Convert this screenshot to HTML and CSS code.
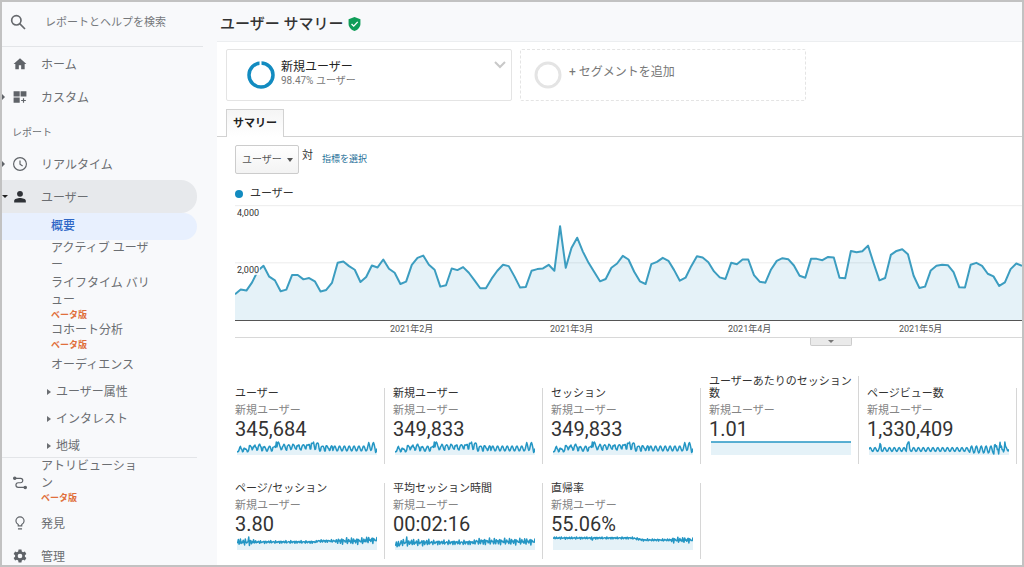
FILE: index.html
```html
<!DOCTYPE html>
<html lang="ja">
<head>
<meta charset="utf-8">
<meta name="viewport" content="width=device-width, initial-scale=1">
<title>ユーザー サマリー</title>
<link rel="stylesheet" href="styles.css">
</head>
<body>
<div class="app">
  <aside class="sidebar">
    <form class="search" role="search">
      <label for="q" class="search-label" aria-label="検索"><svg class="search-icon" viewBox="0 0 24 24"><circle cx="9.500" cy="9.500" r="7"/><path d="M14.500 14.500 22.500 22.500"/></svg></label>
      <input id="q" class="search-input" type="text" placeholder="レポートとヘルプを検索">
    </form>
    <nav class="nav">
      <a class="item" href="#"><svg class="icon" viewBox="0 0 24 24"><path d="M10 21v-7h4v7h6v-9h3L12 2 1 12h3v9z"/></svg><span>ホーム</span></a>
      <a class="item has-arrow" href="#"><svg class="icon" viewBox="0 0 24 24"><path d="M1 2h10.500v9H1zM13 2h10v9H13zM1 13h10.500v9H1zM17 14h2v3h3v2h-3v3h-2v-3h-3v-2h3z"/></svg><span>カスタム</span></a>
      <h2 class="nav-title">レポート</h2>
      <a class="item has-arrow" href="#"><svg class="icon line" viewBox="0 0 24 24"><circle cx="12" cy="12" r="11"/><path d="M12 6v6.500l4.500 3"/></svg><span>リアルタイム</span></a>
      <a class="item is-open" href="#"><svg class="icon" viewBox="0 0 24 24"><circle cx="12" cy="6.500" r="5"/><path d="M2 21.500v-3c0-3.500 6-5 10-5s10 1.500 10 5v3z"/></svg><span>ユーザー</span></a>
      <a class="sub is-current" href="#">概要</a>
      <a class="sub wrap" href="#">アクティブ ユーザー</a>
      <a class="sub wrap" href="#">ライフタイム バリュー<small class="beta">ベータ版</small></a>
      <a class="sub wrap" href="#">コホート分析<small class="beta">ベータ版</small></a>
      <a class="sub" href="#">オーディエンス</a>
      <a class="sub group" href="#">ユーザー属性</a>
      <a class="sub group" href="#">インタレスト</a>
      <a class="sub group" href="#">地域</a>
      <a class="item tall" href="#"><svg class="icon line" viewBox="0 0 24 24"><path d="M3 4h10a3.500 3.500 0 0 1 0 7.500H9a4 4 0 0 0 0 8h11"/><circle class="dot" cx="3" cy="4" r="2"/><circle class="dot" cx="21" cy="19.500" r="2"/></svg><span class="long">アトリビューション<small class="beta">ベータ版</small></span></a>
      <a class="item" href="#"><svg class="icon line" viewBox="0 0 24 24"><path d="M9 17v-2.500C6.500 13 5 11 5 8.500a7 7 0 0 1 14 0c0 2.500-1.500 4.500-4 6V17zM8.500 22h7"/></svg><span>発見</span></a>
      <a class="item" href="#"><svg class="icon" viewBox="0 0 24 24"><path fill-rule="evenodd" d="M9.500 1h5l.6 3.200 2.200 1.300 3.100-1.100 2.500 4.300-2.500 2.100v2.400l2.500 2.100-2.500 4.300-3.100-1.100-2.200 1.300-.6 3.200h-5l-.6-3.200-2.200-1.300-3.100 1.100-2.500-4.300 2.500-2.100v-2.400L1.100 8.700l2.500-4.300 3.100 1.100 2.200-1.300zM12 8a4 4 0 1 0 0 8 4 4 0 0 0 0-8z"/></svg><span>管理</span></a>
    </nav>
  </aside>
  <main class="main">
    <header class="header">
      <h1 class="title">ユーザー サマリー</h1>
      <svg class="shield" viewBox="0 0 24 26"><path fill="#0f9d58" d="M12 0 23 4v9c0 6-5 11-11 13C6 24 1 19 1 13V4z"/><path fill="none" stroke="#fff" stroke-width="2.500" d="m6.500 13 4 4 7.500-8"/></svg>
    </header>
    <div class="content">
      <section class="segments">
        <button class="segment" type="button">
          <svg class="ring" viewBox="0 0 28 28"><circle cx="14" cy="14" r="12"/><path d="M13.500 0v5"/></svg>
          <span class="segment-text"><span class="segment-name">新規ユーザー</span><span class="segment-share">98.47% ユーザー</span></span>
          <svg class="chevron" viewBox="0 0 12 8"><path d="m1 1 5 5 5-5"/></svg>
        </button>
        <button class="segment add" type="button">
          <svg class="ring empty" viewBox="0 0 28 28"><circle cx="14" cy="14" r="12"/></svg>
          <span class="segment-add">+ セグメントを追加</span>
        </button>
      </section>
      <div class="tabs" role="tablist"><button class="tab" type="button" role="tab" aria-selected="true">サマリー</button></div>
      <section class="report">
        <div class="controls">
          <span class="select-box"><select class="select" aria-label="指標"><option>ユーザー</option></select></span>
          <span class="versus">対</span>
          <a class="pick" href="#">指標を選択</a>
        </div>
        <div class="legend">ユーザー</div>
        <div class="chart">
          <svg class="plot" id="plot" viewBox="0 0 2361 348" preserveAspectRatio="none"></svg>
          <span class="tick top">4,000</span>
          <span class="tick mid">2,000</span>
        </div>
        <div class="months"><span>2021年2月</span><span>2021年3月</span><span>2021年4月</span><span>2021年5月</span></div>
        <div class="timeline"><button class="handle" type="button" aria-label="展開"></button></div>
        <div class="metrics">
          <article class="metric"><h3 class="name">ユーザー</h3><p class="who">新規ユーザー</p><p class="value">345,684</p><svg class="spark" data-kind="users"></svg></article>
          <article class="metric"><h3 class="name">新規ユーザー</h3><p class="who">新規ユーザー</p><p class="value">349,833</p><svg class="spark" data-kind="users"></svg></article>
          <article class="metric"><h3 class="name">セッション</h3><p class="who">新規ユーザー</p><p class="value">349,833</p><svg class="spark" data-kind="users"></svg></article>
          <article class="metric"><h3 class="name">ユーザーあたりのセッション数</h3><p class="who">新規ユーザー</p><p class="value">1.01</p><svg class="spark" data-kind="flat"></svg></article>
          <article class="metric"><h3 class="name">ページビュー数</h3><p class="who">新規ユーザー</p><p class="value">1,330,409</p><svg class="spark" data-kind="views"></svg></article>
          <article class="metric"><h3 class="name">ページ/セッション</h3><p class="who">新規ユーザー</p><p class="value">3.80</p><svg class="spark" data-kind="pages"></svg></article>
          <article class="metric"><h3 class="name">平均セッション時間</h3><p class="who">新規ユーザー</p><p class="value">00:02:16</p><svg class="spark" data-kind="time"></svg></article>
          <article class="metric"><h3 class="name">直帰率</h3><p class="who">新規ユーザー</p><p class="value">55.06%</p><svg class="spark" data-kind="bounce"></svg></article>
        </div>
      </section>
    </div>
  </main>
</div>
<script src="charts.js"></script>
</body>
</html>
```

FILE: styles.css
```css
* { box-sizing: border-box; }
body {
  margin: 0;
  font-family: Roboto, "Noto Sans CJK JP", sans-serif;
  font-size: 12px;
  color: #333;
}
h1, h2, h3, p { margin: 0; font-weight: 400; }
a { color: inherit; text-decoration: none; }
button, input, select { font: inherit; color: inherit; }

.app {
  display: flex;
  height: 100vh;
  overflow: hidden;
  background: #f8f9fb;
  border: 2px solid #c2c2c2;
}

/* Sidebar */
.sidebar { flex: 0 0 215px; overflow: hidden; color: #6b6e72; }
.search {
  display: flex;
  align-items: center;
  height: 45px;
  margin-right: 14px;
  padding: 0 0 4px 8px;
  border-bottom: 1px solid #e3e5e8;
}
.search-label { display: flex; }
.search-icon { width: 16px; height: 16px; fill: none; stroke: #66696d; stroke-width: 2.5; }
.search-input {
  flex: 1;
  min-width: 0;
  margin-left: 19px;
  padding: 0;
  border: 0;
  background: none;
  font-size: 11px;
}
.search-input::placeholder { color: #75787c; }
.item {
  position: relative;
  display: flex;
  align-items: center;
  gap: 14px;
  height: 33px;
  padding-left: 11px;
  margin-right: 20px;
}
.icon { flex: none; width: 14px; height: 14px; overflow: visible; fill: #5f6368; }
.icon.line { fill: none; stroke: #5f6368; stroke-width: 2; }
.icon .dot { fill: #5f6368; }
.has-arrow::before, .is-open::before {
  content: "";
  position: absolute;
  left: 0;
  border: 3px solid transparent;
}
.has-arrow::before { border-left-color: #5f6368; border-right: 0; }
.is-open::before { border-top-color: #222; border-bottom: 0; }
.is-open { background: #e7e9ec; border-radius: 0 16px 16px 0; }
.is-open .icon { fill: #2f3237; }
.nav-title { padding: 12px 0 7px 10px; font-size: 10px; line-height: 15px; }
.sub { display: block; margin-right: 20px; padding-left: 49px; line-height: 27px; }
.sub.is-current {
  background: #e8f0fe;
  border-radius: 0 14px 14px 0;
  color: #2f67c6;
  font-weight: 500;
}
.sub.wrap { width: 152px; padding-bottom: 1px; line-height: 17px; line-break: anywhere; }
.sub.group { position: relative; padding-left: 54px; }
.sub.group::before {
  content: "";
  position: absolute;
  left: 45px;
  top: 10px;
  border: 3px solid transparent;
  border-left: 4px solid #6b6e72;
  border-right: 0;
}
.beta { display: block; color: #e0703c; font-size: 9px; font-weight: 700; line-height: 12px; }
.item.tall {
  height: 49px;
  margin-top: -3px;
  align-items: flex-start;
  border-top: 1px solid #e3e5e8;
}
.tall .icon { margin-top: 18px; }
.long { width: 100px; line-height: 17px; line-break: anywhere; }

/* Header */
.main { flex: 1; min-width: 0; }
.header { display: flex; align-items: center; gap: 5px; height: 39px; padding: 4px 0 0 3px; }
.title { color: #333; font-size: 15px; font-weight: 500; line-height: 22px; }
.shield { width: 13px; height: 14px; }
.content { height: 100%; background: #fff; border-top: 1px solid #eceef0; }

/* Segments */
.segments { display: flex; gap: 8px; padding: 7px 9px 0; }
.segment {
  display: flex;
  align-items: flex-start;
  flex: 0 1 286px;
  height: 52px;
  padding: 11px 5px 0 20px;
  background: #fff;
  border: 1px solid #e4e4e4;
  border-radius: 2px;
  text-align: left;
}
.segment.add { padding-left: 13px; border-style: dashed; color: #777; }
.ring { width: 28px; height: 28px; fill: none; stroke: #128bc0; stroke-width: 3.5; }
.ring path { stroke: #fff; stroke-width: 2; }
.ring.empty { stroke: #e4e4e4; stroke-width: 3; }
.segment-text { flex: 1; margin-left: 6px; }
.segment-name { display: block; color: #222; line-height: 13px; }
.segment-share { display: block; color: #777; font-size: 10px; line-height: 14px; }
.segment-add { margin: 2px 0 0 7px; line-height: 18px; }
.chevron { width: 12px; height: 8px; fill: none; stroke: #c8c8c8; stroke-width: 2; }

/* Tabs */
.tabs { display: flex; margin-top: 8px; padding-left: 9px; border-bottom: 1px solid #d2d2d2; }
.tab {
  height: 28px;
  margin-bottom: -1px;
  padding: 0 6px 3px;
  border: 1px solid #d2d2d2;
  border-bottom: 0;
  background: linear-gradient(#f5f5f5, #fff);
  color: #222;
  font-size: 11px;
  font-weight: 700;
}

/* Report */
.report { padding: 8px 0 0 18px; }
.controls { display: flex; align-items: flex-start; height: 30px; }
.select-box { position: relative; }
.select-box::after {
  content: "";
  position: absolute;
  right: 6px;
  top: 13px;
  border: 3px solid transparent;
  border-top: 4px solid #555;
  border-bottom: 0;
  pointer-events: none;
}
.select {
  appearance: none;
  width: 64px;
  height: 29px;
  padding: 0 0 0 6px;
  border: 1px solid #ccc;
  border-radius: 2px;
  background: linear-gradient(#fff, #f3f3f3);
  color: #555;
  font-size: 10px;
}
.versus { margin-left: 3px; font-size: 11px; line-height: 22px; }
.pick { margin-left: 9px; color: #1f6f98; font-size: 9px; line-height: 28px; }
.legend {
  display: flex;
  align-items: center;
  gap: 7px;
  margin: 11px 0 3px;
  font-size: 11px;
  line-height: 16px;
}
.legend::before { content: ""; width: 8px; height: 8px; border-radius: 50%; background: #128bc0; }
.chart { position: relative; height: 116px; border-bottom: 1px solid #555; }
.plot { display: block; width: 100%; height: 100%; }
.grid-line { stroke: #ececec; fill: none; vector-effect: non-scaling-stroke; }
.area { fill: #128bc01c; }
.trend { fill: none; stroke: #3c9dc0; stroke-width: 2; stroke-linejoin: round; vector-effect: non-scaling-stroke; }
.tick { position: absolute; left: 1px; padding: 0 1px; font-size: 9px; line-height: 10px; }
.tick.top { top: 3px; }
.tick.mid { top: 60px; background: #fffc; }
.months {
  display: grid;
  grid-template-columns: 160fr 178fr 171fr 123fr;
  height: 17px;
  padding-left: 155px;
  border-bottom: 1px solid #d8d8d8;
  color: #555;
  font-size: 9px;
  line-height: 17px;
  white-space: nowrap;
}
.timeline { height: 38px; padding-left: 73%; }
.handle {
  display: flex;
  justify-content: center;
  width: 42px;
  height: 8px;
  padding: 2px 0;
  border: 1px solid #ccc;
  border-top: 0;
  border-radius: 0 0 2px 2px;
  background: #eaeaea;
}
.handle::before { content: ""; border: 3px solid transparent; border-top-color: #777; border-bottom: 0; }

/* Metrics */
.metrics {
  display: grid;
  grid-template-columns: repeat(auto-fill, 150px);
  gap: 19px 8px;
  align-items: end;
}
.metric { padding: 0 0 9px; border-right: 1px solid #d6d6d6; }
.name { color: #333; font-size: 11px; line-height: 12px; }
.who { margin-top: 4px; color: #858585; font-size: 11px; line-height: 13px; }
.value { color: #333; font-size: 20px; line-height: 24px; }
.spark { display: block; width: 140px; height: 14px; margin-left: 2px; }
.spark .trend { stroke: #2496c4; stroke-width: 1.5; }
```

FILE: charts.js
```js
const NS = "http://www.w3.org/2000/svg";

// Daily depth below the top of the plot, in viewBox units.
const daily = [
  270,256,259,234,199,184,217,228,261,256,212,212,225,221,231,262,257,236,175,171,185,196,233,218,
  183,189,165,193,205,239,232,181,160,153,181,196,247,243,192,197,188,205,228,252,252,223,199,181,
  185,216,250,248,199,194,192,181,199,64,190,130,99,141,175,203,231,224,190,177,154,165,202,231,239,
  179,172,160,169,197,229,220,185,155,159,173,201,219,224,175,179,165,165,212,232,235,195,169,161,164,
  183,214,220,163,163,167,157,159,220,222,139,143,140,123,177,228,221,151,139,134,149,214,251,247,198,
  184,181,182,203,249,250,181,175,184,208,216,245,234,194,177,184
];

function add(svg, tag, cls, attrs) {
  const el = document.createElementNS(NS, tag);
  el.setAttribute("class", cls);
  for (const key in attrs) el.setAttribute(key, attrs[key]);
  svg.appendChild(el);
}

function draw(svg, values, width, height) {
  const step = width / (values.length - 1);
  const points = values.map((v, i) => (i * step).toFixed(1) + "," + v.toFixed(1)).join(" ");
  add(svg, "polygon", "area", { points: "0," + height + " " + points + " " + width + "," + height });
  add(svg, "polyline", "trend", { points });
}

const plot = document.getElementById("plot");
add(plot, "path", "grid-line", { d: "M0 2H2361M0 175H2361" });
draw(plot, daily, 2361, 348);

const noise = i => Math.sin(i * 12.9898) * Math.cos(i * 4.1414 + 1);
const week = i => Math.sin(i * Math.PI * 2 / 7);
const series = {
  users: i => i < 139 ? daily[i] / 14.3 - 7.5 : 7.5 - week(i) * (i > 188 ? 4 : 2.5) - (i > 190 && i < 201 ? 2 : 0),
  views: i => 8.5 - week(i) * (i > 145 ? 3.5 : 2) - (i === 16 || i === 17 ? 4 : 0) - (i > 54 && i < 59 ? 6 : 0)
    - (i > 180 ? 1.5 + 4 * noise(i) : 0),
  flat: () => 1,
  pages: i => 6 + noise(i) * (i > 145 || i < 25 ? 3.5 : 1.5) - (i === 17 ? 5 : 0) - (i > 115 ? 1 : 0) - (i > 185 ? 1 : 0),
  time: i => 6.5 + noise(i) * (i > 115 || i < 50 ? 3.5 : 2.5) - (i === 17 ? 4 : 0) - (i > 115 ? 1 : 0) + (i < 8 ? 2 : 0),
  bounce: i => 2 + Math.max(0, Math.min(2, (i - 115) / 8)) + noise(i) * (i > 170 ? 3 : 1.2) + (i === 57 ? 2 : 0)
};

document.querySelectorAll(".spark").forEach(svg => {
  svg.setAttribute("viewBox", "0 0 203 14");
  svg.setAttribute("preserveAspectRatio", "none");
  const values = Array.from({ length: 204 }, (_, i) => Math.max(1, Math.min(13, series[svg.dataset.kind](i))));
  draw(svg, values, 203, 14);
});
```
